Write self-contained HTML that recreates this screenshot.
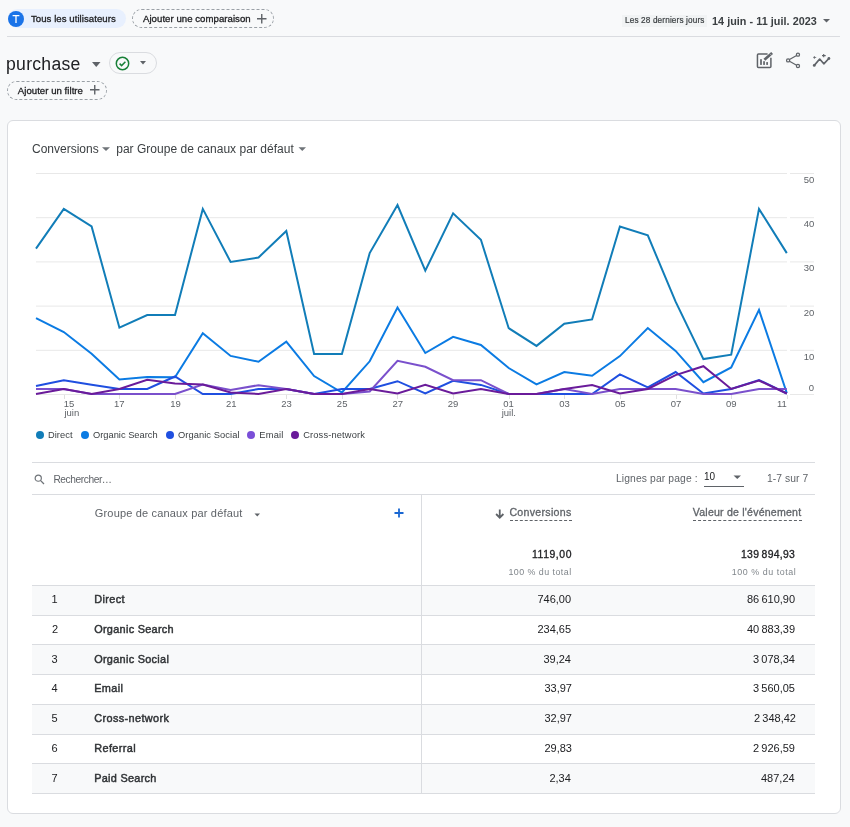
<!DOCTYPE html>
<html><head><meta charset="utf-8"><style>
*{box-sizing:border-box;margin:0;padding:0}
html,body{width:850px;height:827px;overflow:hidden;background:#f8f9fa;font-family:"Liberation Sans",sans-serif;color:#202124}
.a{position:absolute}
.t{position:absolute;white-space:pre;transform:translateZ(0)}
.dash{position:absolute;border:1px dashed #9aa0a6;border-radius:10px}
.card{position:absolute;left:7px;top:120px;width:834px;height:694px;background:#fff;border:1px solid #dadce0;border-radius:6px}
.chart{position:absolute;left:0;top:0}
.dot{position:absolute;top:430.8px;width:8px;height:8px;border-radius:50%}
.hl{position:absolute;left:32px;width:783px;height:1px;background:#dadce0}
.row{position:absolute;left:32px;width:783px}
</style></head><body>
<div class="a" style="left:8px;top:9px;width:118px;height:19px;border-radius:10px;background:#e8f0fe"></div>
<div class="a" style="left:8px;top:11px;width:16px;height:16px;border-radius:50%;background:#1a73e8"></div>
<svg class="a" style="left:8px;top:11px" width="16" height="16" viewBox="0 0 16 16"><path d="M4.6 4.6h6.8M8 4.6v7.4" stroke="#fff" stroke-width="1.3"/></svg>
<div class="dash" style="left:132px;top:9px;width:142px;height:19px"></div>
<svg class="a" style="left:257px;top:13.5px" width="10" height="10" viewBox="0 0 10 10"><path d="M4.75 0v9.5M0 4.75h9.5" stroke="#5f6368" stroke-width="1.4"/></svg>
<div class="a" style="left:7px;top:36px;width:833px;height:1px;background:#dadce0"></div>
<div class="a" style="left:622px;top:15px;width:85px;height:11.5px;background:#f1f3f4"></div>
<svg class="a" style="left:822px;top:18px" width="10" height="6"><path d="M1 1h7l-3.5 3.5z" fill="#5f6368"/></svg>

<svg class="a" style="left:91px;top:61px" width="11" height="8"><path d="M1 1h8.5l-4.25 5z" fill="#5f6368"/></svg>
<div class="a" style="left:109px;top:52px;width:48px;height:22px;border:1px solid #dadce0;border-radius:11px"></div>
<svg class="a" style="left:115px;top:55.5px" width="15" height="15" viewBox="0 0 15 15"><circle cx="7.5" cy="7.5" r="6.2" fill="none" stroke="#188038" stroke-width="1.5"/><path d="M4.6 7.6l2 2 3.8-3.8" fill="none" stroke="#188038" stroke-width="1.5"/></svg>
<svg class="a" style="left:139px;top:60px" width="9" height="6"><path d="M1 1h6l-3 3.5z" fill="#5f6368"/></svg>
<div class="dash" style="left:7px;top:81px;width:100px;height:19px"></div>
<svg class="a" style="left:90px;top:85px" width="10" height="10" viewBox="0 0 10 10"><path d="M4.75 0v9.5M0 4.75h9.5" stroke="#5f6368" stroke-width="1.4"/></svg>

<svg class="a" style="left:754px;top:50px" width="22" height="22" viewBox="0 0 22 22">
<path d="M13.6 4H4.45a1 1 0 0 0-1 1V16.6a1 1 0 0 0 1 1H15.9a1 1 0 0 0 1-1V7.8" fill="none" stroke="#5f6368" stroke-width="1.5"/>
<rect x="6.15" y="9.2" width="1.7" height="5.7" fill="#5f6368"/><rect x="9.2" y="11.2" width="1.7" height="3.7" fill="#5f6368"/><rect x="12.25" y="12.1" width="1.7" height="2.8" fill="#5f6368"/>
<path d="M10.4 9.7L18.1 3.1" stroke="#5f6368" stroke-width="2.7"/>
<path d="M16.2 3.9l1.2 1.3" stroke="#f8f9fa" stroke-width="0.5"/>
</svg>
<svg class="a" style="left:782px;top:50px" width="22" height="22" viewBox="0 0 22 22">
<circle cx="15.96" cy="4.65" r="1.55" fill="none" stroke="#5f6368" stroke-width="1.25"/>
<circle cx="6.1" cy="10.4" r="1.55" fill="none" stroke="#5f6368" stroke-width="1.25"/>
<circle cx="15.96" cy="15.96" r="1.55" fill="none" stroke="#5f6368" stroke-width="1.25"/>
<path d="M7.5 9.6l7.1-4.1M7.5 11.2l7.1 4" stroke="#5f6368" stroke-width="1.2"/>
</svg>
<svg class="a" style="left:810px;top:50px" width="22" height="22" viewBox="0 0 22 22">
<path d="M4.25 15.4L9.7 9.05L13.8 13.8L18.9 8.5" fill="none" stroke="#5f6368" stroke-width="1.7" stroke-linejoin="round"/>
<circle cx="4.25" cy="15.4" r="1.4" fill="#5f6368"/><circle cx="18.9" cy="8.5" r="1.4" fill="#5f6368"/>
<path d="M4.4 6.1v2.7M3.2 7.45h3" stroke="#5f6368" stroke-width="0.8"/>
<path d="M13.7 4v3.2M12 5.6h3.7" stroke="#5f6368" stroke-width="1.1"/>
</svg>

<div class="card"></div>
<svg class="a" style="left:102px;top:147px" width="9" height="5"><path d="M0 0.2h8l-4 3.8z" fill="#6f7479"/></svg>
<svg class="a" style="left:298px;top:147px" width="9" height="5"><path d="M0.5 0.2h7.5l-3.75 3.8z" fill="#6f7479"/></svg>
<svg class="chart" width="850" height="420" viewBox="0 0 850 420">
<line x1="36" y1="173.5" x2="787" y2="173.5" stroke="#e8e8e8" stroke-width="1"/><line x1="790" y1="173.5" x2="814" y2="173.5" stroke="#e8e8e8" stroke-width="1"/><line x1="36" y1="217.7" x2="787" y2="217.7" stroke="#e8e8e8" stroke-width="1"/><line x1="790" y1="217.7" x2="814" y2="217.7" stroke="#e8e8e8" stroke-width="1"/><line x1="36" y1="261.9" x2="787" y2="261.9" stroke="#e8e8e8" stroke-width="1"/><line x1="790" y1="261.9" x2="814" y2="261.9" stroke="#e8e8e8" stroke-width="1"/><line x1="36" y1="306.1" x2="787" y2="306.1" stroke="#e8e8e8" stroke-width="1"/><line x1="790" y1="306.1" x2="814" y2="306.1" stroke="#e8e8e8" stroke-width="1"/><line x1="36" y1="350.3" x2="787" y2="350.3" stroke="#e8e8e8" stroke-width="1"/><line x1="790" y1="350.3" x2="814" y2="350.3" stroke="#e8e8e8" stroke-width="1"/><line x1="36" y1="394.5" x2="787" y2="394.5" stroke="#e8e8e8" stroke-width="1"/><line x1="790" y1="394.5" x2="814" y2="394.5" stroke="#e8e8e8" stroke-width="1"/><line x1="64.5" y1="395" x2="64.5" y2="399" stroke="#e0e0e0" stroke-width="1"/><line x1="119.5" y1="395" x2="119.5" y2="399" stroke="#e0e0e0" stroke-width="1"/><line x1="175.5" y1="395" x2="175.5" y2="399" stroke="#e0e0e0" stroke-width="1"/><line x1="231.5" y1="395" x2="231.5" y2="399" stroke="#e0e0e0" stroke-width="1"/><line x1="286.5" y1="395" x2="286.5" y2="399" stroke="#e0e0e0" stroke-width="1"/><line x1="342.5" y1="395" x2="342.5" y2="399" stroke="#e0e0e0" stroke-width="1"/><line x1="397.5" y1="395" x2="397.5" y2="399" stroke="#e0e0e0" stroke-width="1"/><line x1="453.5" y1="395" x2="453.5" y2="399" stroke="#e0e0e0" stroke-width="1"/><line x1="509.5" y1="395" x2="509.5" y2="399" stroke="#e0e0e0" stroke-width="1"/><line x1="564.5" y1="395" x2="564.5" y2="399" stroke="#e0e0e0" stroke-width="1"/><line x1="620.5" y1="395" x2="620.5" y2="399" stroke="#e0e0e0" stroke-width="1"/><line x1="676.5" y1="395" x2="676.5" y2="399" stroke="#e0e0e0" stroke-width="1"/><line x1="731.5" y1="395" x2="731.5" y2="399" stroke="#e0e0e0" stroke-width="1"/><line x1="787.5" y1="395" x2="787.5" y2="399" stroke="#e0e0e0" stroke-width="1"/>
<polyline points="36.0,248.6 63.8,208.9 91.6,226.5 119.4,327.7 147.2,315.0 175.0,315.0 202.8,208.9 230.6,261.9 258.5,257.5 286.3,231.0 314.1,354.0 341.9,354.0 369.7,253.1 397.5,205.1 425.3,270.7 453.1,213.3 480.9,239.8 508.7,328.2 536.5,345.9 564.3,323.8 592.1,319.4 619.9,226.5 647.8,235.4 675.6,301.7 703.4,359.1 731.2,354.7 759.0,208.9 786.8,253.1" fill="none" stroke="#117db8" stroke-width="2" stroke-linejoin="miter" stroke-miterlimit="4"/><polyline points="36.0,318.1 63.8,332.0 91.6,353.8 119.4,379.5 147.2,376.9 175.0,377.2 202.8,333.2 230.6,355.9 258.5,361.8 286.3,341.7 314.1,376.1 341.9,392.5 369.7,361.3 397.5,307.5 425.3,353.0 453.1,336.8 480.9,345.0 508.7,368.0 536.5,384.3 564.3,372.0 592.1,375.7 619.9,356.1 647.8,328.0 675.6,350.9 703.4,382.2 731.2,367.4 759.0,309.9 786.8,393.0" fill="none" stroke="#0b7be3" stroke-width="2" stroke-linejoin="miter" stroke-miterlimit="4"/><polyline points="36.0,386.1 63.8,380.3 91.6,384.8 119.4,389.0 147.2,389.0 175.0,376.5 202.8,394.0 230.6,394.0 258.5,389.0 286.3,389.0 314.1,394.0 341.9,389.0 369.7,389.0 397.5,381.2 425.3,393.5 453.1,380.8 480.9,384.9 508.7,394.0 536.5,394.0 564.3,394.0 592.1,394.0 619.9,374.4 647.8,387.3 675.6,372.0 703.4,393.5 731.2,389.0 759.0,380.0 786.8,393.5" fill="none" stroke="#1f4fe0" stroke-width="2" stroke-linejoin="miter" stroke-miterlimit="4"/><polyline points="36.0,389.0 63.8,389.0 91.6,394.0 119.4,394.0 147.2,394.0 175.0,394.0 202.8,384.6 230.6,390.1 258.5,385.2 286.3,389.0 314.1,394.0 341.9,394.0 369.7,391.5 397.5,360.8 425.3,366.8 453.1,380.2 480.9,380.2 508.7,394.0 536.5,394.0 564.3,389.0 592.1,394.0 619.9,389.0 647.8,389.0 675.6,389.0 703.4,394.0 731.2,394.0 759.0,389.0 786.8,389.0" fill="none" stroke="#7a50cc" stroke-width="2" stroke-linejoin="miter" stroke-miterlimit="4"/><polyline points="36.0,394.0 63.8,389.0 91.6,394.0 119.4,389.0 147.2,379.8 175.0,383.4 202.8,384.6 230.6,392.5 258.5,394.0 286.3,389.0 314.1,394.0 341.9,394.0 369.7,389.0 397.5,393.5 425.3,384.9 453.1,393.5 480.9,389.0 508.7,394.0 536.5,394.0 564.3,389.0 592.1,385.1 619.9,393.5 647.8,389.0 675.6,375.1 703.4,366.2 731.2,389.0 759.0,380.5 786.8,393.5" fill="none" stroke="#6a1b9a" stroke-width="2" stroke-linejoin="miter" stroke-miterlimit="4"/>
</svg>

<div class="dot" style="left:36px;background:#117db8"></div>
<div class="dot" style="left:81px;background:#0b7be3"></div>
<div class="dot" style="left:166px;background:#1f4fe0"></div>
<div class="dot" style="left:247px;background:#7a4fd8"></div>
<div class="dot" style="left:291.4px;background:#6a1b9a"></div>

<div class="hl" style="top:462px"></div>
<svg class="a" style="left:33px;top:474px" width="13" height="12" viewBox="0 0 13 12"><circle cx="5.25" cy="4.15" r="3.1" fill="none" stroke="#6f7479" stroke-width="1.2"/><path d="M7.4 6.4l3.6 3.6" stroke="#6f7479" stroke-width="1.3"/></svg>
<svg class="a" style="left:733px;top:474.5px" width="9" height="5"><path d="M0.5 0.5h7.5l-3.75 3.5z" fill="#5f6368"/></svg>
<div class="a" style="left:704px;top:486px;width:40px;height:1px;background:#5f6368"></div>
<div class="hl" style="top:494px"></div>

<svg class="a" style="left:253.5px;top:512.5px" width="7" height="4"><path d="M0.5 0.5h5.5l-2.75 3z" fill="#5f6368"/></svg>
<svg class="a" style="left:393px;top:507px" width="12" height="12" viewBox="0 0 12 12"><path d="M6 1.5v9M1.5 6h9" stroke="#1967d2" stroke-width="1.8"/></svg>
<svg class="a" style="left:495px;top:508.5px" width="10" height="11" viewBox="0 0 10 11"><path d="M4.75 0.5v8.2M1.1 5l3.65 3.65 3.65-3.65" fill="none" stroke="#5f6368" stroke-width="1.8"/></svg>
<div class="a" style="left:509.5px;top:520px;width:62px;height:1px;border-top:1px dashed #5f6368"></div>
<div class="a" style="left:692.5px;top:520px;width:109.5px;height:1px;border-top:1px dashed #5f6368"></div>

<div class="row" style="top:586px;height:29px;background:#f8f9fa"></div><div class="row" style="top:616px;height:28px;background:#fff"></div><div class="row" style="top:645px;height:29px;background:#f8f9fa"></div><div class="row" style="top:675px;height:29px;background:#fff"></div><div class="row" style="top:705px;height:29px;background:#f8f9fa"></div><div class="row" style="top:735px;height:28px;background:#fff"></div><div class="row" style="top:764px;height:29px;background:#f8f9fa"></div><div class="hl" style="top:585px"></div><div class="hl" style="top:615px"></div><div class="hl" style="top:644px"></div><div class="hl" style="top:674px"></div><div class="hl" style="top:704px"></div><div class="hl" style="top:734px"></div><div class="hl" style="top:763px"></div><div class="hl" style="top:793px"></div>
<div class="a" style="left:421px;top:495px;width:1px;height:298px;background:#dadce0"></div>
<div class="t" style="left:31.0px;top:14px;font-family:'Liberation Sans';font-size:9.6px;line-height:9.6px;white-space:pre;font-weight:400;-webkit-text-stroke:0.3px #202124;letter-spacing:0.050px;color:#202124;">Tous les utilisateurs</div>
<div class="t" style="left:143.0px;top:14px;font-family:'Liberation Sans';font-size:9.6px;line-height:9.6px;white-space:pre;font-weight:400;-webkit-text-stroke:0.3px #202124;letter-spacing:0.045px;color:#202124;">Ajouter une comparaison</div>
<div class="t" style="left:625.0px;top:17px;font-family:'Liberation Sans';font-size:8.2px;line-height:8.2px;white-space:pre;font-weight:400;-webkit-text-stroke:0.2px #3c4043;letter-spacing:0.150px;color:#3c4043;">Les 28 derniers jours</div>
<div class="t" style="left:712.0px;top:16px;font-family:'Liberation Sans';font-size:10.8px;line-height:10.8px;white-space:pre;font-weight:700;letter-spacing:0.045px;color:#3c4043;">14 juin - 11 juil. 2023</div>
<div class="t" style="left:6.0px;top:56px;font-family:'Liberation Sans';font-size:17.6px;line-height:17.6px;white-space:pre;font-weight:400;letter-spacing:0.286px;color:#202124;">purchase</div>
<div class="t" style="left:17.8px;top:86px;font-family:'Liberation Sans';font-size:9.6px;line-height:9.6px;white-space:pre;font-weight:400;-webkit-text-stroke:0.3px #202124;letter-spacing:0.037px;color:#202124;">Ajouter un filtre</div>
<div class="t" style="left:32.0px;top:143px;font-family:'Liberation Sans';font-size:12px;line-height:12px;white-space:pre;font-weight:400;color:#3c4043;">Conversions</div>
<div class="t" style="left:116.2px;top:143px;font-family:'Liberation Sans';font-size:12px;line-height:12px;white-space:pre;font-weight:400;letter-spacing:0.027px;color:#3c4043;">par Groupe de canaux par défaut</div>
<div class="t" style="left:803.8px;top:175px;font-family:'Liberation Sans';font-size:9.5px;line-height:9.5px;white-space:pre;font-weight:400;color:#5f6368;">50</div>
<div class="t" style="left:803.8px;top:219px;font-family:'Liberation Sans';font-size:9.5px;line-height:9.5px;white-space:pre;font-weight:400;color:#5f6368;">40</div>
<div class="t" style="left:803.8px;top:263px;font-family:'Liberation Sans';font-size:9.5px;line-height:9.5px;white-space:pre;font-weight:400;color:#5f6368;">30</div>
<div class="t" style="left:803.8px;top:308px;font-family:'Liberation Sans';font-size:9.5px;line-height:9.5px;white-space:pre;font-weight:400;color:#5f6368;">20</div>
<div class="t" style="left:803.8px;top:352px;font-family:'Liberation Sans';font-size:9.5px;line-height:9.5px;white-space:pre;font-weight:400;color:#5f6368;">10</div>
<div class="t" style="left:808.8px;top:383px;font-family:'Liberation Sans';font-size:9.5px;line-height:9.5px;white-space:pre;font-weight:400;color:#5f6368;">0</div>
<div class="t" style="left:113.94px;top:399px;font-family:'Liberation Sans';font-size:9.5px;line-height:9.5px;white-space:pre;font-weight:400;color:#5f6368;">17</div>
<div class="t" style="left:170.17px;top:399px;font-family:'Liberation Sans';font-size:9.5px;line-height:9.5px;white-space:pre;font-weight:400;color:#5f6368;">19</div>
<div class="t" style="left:225.9px;top:399px;font-family:'Liberation Sans';font-size:9.5px;line-height:9.5px;white-space:pre;font-weight:400;color:#5f6368;">21</div>
<div class="t" style="left:281.13px;top:399px;font-family:'Liberation Sans';font-size:9.5px;line-height:9.5px;white-space:pre;font-weight:400;color:#5f6368;">23</div>
<div class="t" style="left:336.85px;top:399px;font-family:'Liberation Sans';font-size:9.5px;line-height:9.5px;white-space:pre;font-weight:400;color:#5f6368;">25</div>
<div class="t" style="left:392.58px;top:399px;font-family:'Liberation Sans';font-size:9.5px;line-height:9.5px;white-space:pre;font-weight:400;color:#5f6368;">27</div>
<div class="t" style="left:447.81px;top:399px;font-family:'Liberation Sans';font-size:9.5px;line-height:9.5px;white-space:pre;font-weight:400;color:#5f6368;">29</div>
<div class="t" style="left:559.27px;top:399px;font-family:'Liberation Sans';font-size:9.5px;line-height:9.5px;white-space:pre;font-weight:400;color:#5f6368;">03</div>
<div class="t" style="left:614.99px;top:399px;font-family:'Liberation Sans';font-size:9.5px;line-height:9.5px;white-space:pre;font-weight:400;color:#5f6368;">05</div>
<div class="t" style="left:670.72px;top:399px;font-family:'Liberation Sans';font-size:9.5px;line-height:9.5px;white-space:pre;font-weight:400;color:#5f6368;">07</div>
<div class="t" style="left:725.95px;top:399px;font-family:'Liberation Sans';font-size:9.5px;line-height:9.5px;white-space:pre;font-weight:400;color:#5f6368;">09</div>
<div class="t" style="left:63.8px;top:399px;font-family:'Liberation Sans';font-size:9.5px;line-height:9.5px;white-space:pre;font-weight:400;color:#5f6368;">15</div>
<div class="t" style="left:64.4px;top:408px;font-family:'Liberation Sans';font-size:9.5px;line-height:9.5px;white-space:pre;font-weight:400;color:#5f6368;">juin</div>
<div class="t" style="left:503.2px;top:399px;font-family:'Liberation Sans';font-size:9.5px;line-height:9.5px;white-space:pre;font-weight:400;color:#5f6368;">01</div>
<div class="t" style="left:501.7px;top:408px;font-family:'Liberation Sans';font-size:9.5px;line-height:9.5px;white-space:pre;font-weight:400;color:#5f6368;">juil.</div>
<div class="t" style="left:777.0px;top:399px;font-family:'Liberation Sans';font-size:9.5px;line-height:9.5px;white-space:pre;font-weight:400;color:#5f6368;">11</div>
<div class="t" style="left:48.0px;top:431px;font-family:'Liberation Sans';font-size:9.3px;line-height:9.3px;white-space:pre;font-weight:400;letter-spacing:0.040px;color:#3c4043;">Direct</div>
<div class="t" style="left:93.0px;top:431px;font-family:'Liberation Sans';font-size:9.3px;line-height:9.3px;white-space:pre;font-weight:400;color:#3c4043;">Organic Search</div>
<div class="t" style="left:178.0px;top:431px;font-family:'Liberation Sans';font-size:9.3px;line-height:9.3px;white-space:pre;font-weight:400;letter-spacing:0.077px;color:#3c4043;">Organic Social</div>
<div class="t" style="left:259.2px;top:431px;font-family:'Liberation Sans';font-size:9.3px;line-height:9.3px;white-space:pre;font-weight:400;letter-spacing:0.250px;color:#3c4043;">Email</div>
<div class="t" style="left:303.2px;top:431px;font-family:'Liberation Sans';font-size:9.3px;line-height:9.3px;white-space:pre;font-weight:400;letter-spacing:0.150px;color:#3c4043;">Cross-network</div>
<div class="t" style="left:53.4px;top:475px;font-family:'Liberation Sans';font-size:10.2px;line-height:10.2px;white-space:pre;font-weight:400;letter-spacing:-0.420px;color:#5f6368;">Rechercher…</div>
<div class="t" style="left:616.0px;top:474px;font-family:'Liberation Sans';font-size:10.3px;line-height:10.3px;white-space:pre;font-weight:400;letter-spacing:0.125px;color:#5f6368;">Lignes par page :</div>
<div class="t" style="left:704.0px;top:472px;font-family:'Liberation Sans';font-size:10px;line-height:10px;white-space:pre;font-weight:400;color:#202124;">10</div>
<div class="t" style="left:767.0px;top:474px;font-family:'Liberation Sans';font-size:10.3px;line-height:10.3px;white-space:pre;font-weight:400;letter-spacing:0.075px;color:#5f6368;">1-7 sur 7</div>
<div class="t" style="left:94.8px;top:508px;font-family:'Liberation Sans';font-size:11px;line-height:11px;white-space:pre;font-weight:400;letter-spacing:0.169px;color:#5f6368;">Groupe de canaux par défaut</div>
<div class="t" style="left:509.4px;top:507px;font-family:'Liberation Sans';font-size:10.6px;line-height:10.6px;white-space:pre;font-weight:400;-webkit-text-stroke:0.3px #5f6368;letter-spacing:0.300px;color:#5f6368;">Conversions</div>
<div class="t" style="left:692.8px;top:507px;font-family:'Liberation Sans';font-size:10.6px;line-height:10.6px;white-space:pre;font-weight:400;-webkit-text-stroke:0.3px #5f6368;letter-spacing:0.200px;color:#5f6368;">Valeur de l'événement</div>
<div class="t" style="left:532.0px;top:550px;font-family:'Liberation Sans';font-size:10.4px;line-height:10.4px;white-space:pre;font-weight:400;-webkit-text-stroke:0.3px #202124;letter-spacing:0.567px;color:#202124;">1119,00</div>
<div class="t" style="left:508.4px;top:568px;font-family:'Liberation Sans';font-size:8.9px;line-height:8.9px;white-space:pre;font-weight:400;letter-spacing:0.462px;color:#80868b;">100 % du total</div>
<div class="t" style="left:741.0px;top:550px;font-family:'Liberation Sans';font-size:10.4px;line-height:10.4px;white-space:pre;font-weight:400;-webkit-text-stroke:0.3px #202124;letter-spacing:0.289px;color:#202124;">139 894,93</div>
<div class="t" style="left:731.8px;top:568px;font-family:'Liberation Sans';font-size:8.9px;line-height:8.9px;white-space:pre;font-weight:400;letter-spacing:0.554px;color:#80868b;">100 % du total</div>
<div class="t" style="left:51.4px;top:594px;font-family:'Liberation Sans';font-size:11px;line-height:11px;white-space:pre;font-weight:400;color:#202124;">1</div>
<div class="t" style="left:94.2px;top:594px;font-family:'Liberation Sans';font-size:10.9px;line-height:10.9px;white-space:pre;font-weight:400;-webkit-text-stroke:0.45px #303336;letter-spacing:0.400px;color:#303336;">Direct</div>
<div class="t" style="left:537.4px;top:594px;font-family:'Liberation Sans';font-size:11px;line-height:11px;white-space:pre;font-weight:400;color:#202124;">746,00</div>
<div class="t" style="left:747.0px;top:594px;font-family:'Liberation Sans';font-size:11px;line-height:11px;white-space:pre;font-weight:400;color:#202124;">86 610,90</div>
<div class="t" style="left:51.9px;top:624px;font-family:'Liberation Sans';font-size:11px;line-height:11px;white-space:pre;font-weight:400;color:#202124;">2</div>
<div class="t" style="left:94.2px;top:624px;font-family:'Liberation Sans';font-size:10.9px;line-height:10.9px;white-space:pre;font-weight:400;-webkit-text-stroke:0.45px #303336;letter-spacing:0.292px;color:#303336;">Organic Search</div>
<div class="t" style="left:537.4px;top:624px;font-family:'Liberation Sans';font-size:11px;line-height:11px;white-space:pre;font-weight:400;color:#202124;">234,65</div>
<div class="t" style="left:747.0px;top:624px;font-family:'Liberation Sans';font-size:11px;line-height:11px;white-space:pre;font-weight:400;color:#202124;">40 883,39</div>
<div class="t" style="left:51.4px;top:654px;font-family:'Liberation Sans';font-size:11px;line-height:11px;white-space:pre;font-weight:400;color:#202124;">3</div>
<div class="t" style="left:94.2px;top:654px;font-family:'Liberation Sans';font-size:10.9px;line-height:10.9px;white-space:pre;font-weight:400;-webkit-text-stroke:0.45px #303336;letter-spacing:0.292px;color:#303336;">Organic Social</div>
<div class="t" style="left:543.4px;top:654px;font-family:'Liberation Sans';font-size:11px;line-height:11px;white-space:pre;font-weight:400;color:#202124;">39,24</div>
<div class="t" style="left:753.0px;top:654px;font-family:'Liberation Sans';font-size:11px;line-height:11px;white-space:pre;font-weight:400;color:#202124;">3 078,34</div>
<div class="t" style="left:51.4px;top:683px;font-family:'Liberation Sans';font-size:11px;line-height:11px;white-space:pre;font-weight:400;color:#202124;">4</div>
<div class="t" style="left:94.2px;top:683px;font-family:'Liberation Sans';font-size:10.9px;line-height:10.9px;white-space:pre;font-weight:400;-webkit-text-stroke:0.45px #303336;letter-spacing:0.350px;color:#303336;">Email</div>
<div class="t" style="left:544.4px;top:683px;font-family:'Liberation Sans';font-size:11px;line-height:11px;white-space:pre;font-weight:400;color:#202124;">33,97</div>
<div class="t" style="left:753.0px;top:683px;font-family:'Liberation Sans';font-size:11px;line-height:11px;white-space:pre;font-weight:400;color:#202124;">3 560,05</div>
<div class="t" style="left:51.4px;top:713px;font-family:'Liberation Sans';font-size:11px;line-height:11px;white-space:pre;font-weight:400;color:#202124;">5</div>
<div class="t" style="left:94.2px;top:713px;font-family:'Liberation Sans';font-size:10.9px;line-height:10.9px;white-space:pre;font-weight:400;-webkit-text-stroke:0.45px #303336;letter-spacing:0.383px;color:#303336;">Cross-network</div>
<div class="t" style="left:544.4px;top:713px;font-family:'Liberation Sans';font-size:11px;line-height:11px;white-space:pre;font-weight:400;color:#202124;">32,97</div>
<div class="t" style="left:754.0px;top:713px;font-family:'Liberation Sans';font-size:11px;line-height:11px;white-space:pre;font-weight:400;color:#202124;">2 348,42</div>
<div class="t" style="left:51.4px;top:743px;font-family:'Liberation Sans';font-size:11px;line-height:11px;white-space:pre;font-weight:400;color:#202124;">6</div>
<div class="t" style="left:94.2px;top:743px;font-family:'Liberation Sans';font-size:10.9px;line-height:10.9px;white-space:pre;font-weight:400;-webkit-text-stroke:0.45px #303336;letter-spacing:0.400px;color:#303336;">Referral</div>
<div class="t" style="left:544.4px;top:743px;font-family:'Liberation Sans';font-size:11px;line-height:11px;white-space:pre;font-weight:400;color:#202124;">29,83</div>
<div class="t" style="left:753.0px;top:743px;font-family:'Liberation Sans';font-size:11px;line-height:11px;white-space:pre;font-weight:400;color:#202124;">2 926,59</div>
<div class="t" style="left:51.4px;top:773px;font-family:'Liberation Sans';font-size:11px;line-height:11px;white-space:pre;font-weight:400;color:#202124;">7</div>
<div class="t" style="left:94.2px;top:773px;font-family:'Liberation Sans';font-size:10.9px;line-height:10.9px;white-space:pre;font-weight:400;-webkit-text-stroke:0.45px #303336;letter-spacing:0.280px;color:#303336;">Paid Search</div>
<div class="t" style="left:549.4px;top:773px;font-family:'Liberation Sans';font-size:11px;line-height:11px;white-space:pre;font-weight:400;color:#202124;">2,34</div>
<div class="t" style="left:761.0px;top:773px;font-family:'Liberation Sans';font-size:11px;line-height:11px;white-space:pre;font-weight:400;color:#202124;">487,24</div>
</body></html>
